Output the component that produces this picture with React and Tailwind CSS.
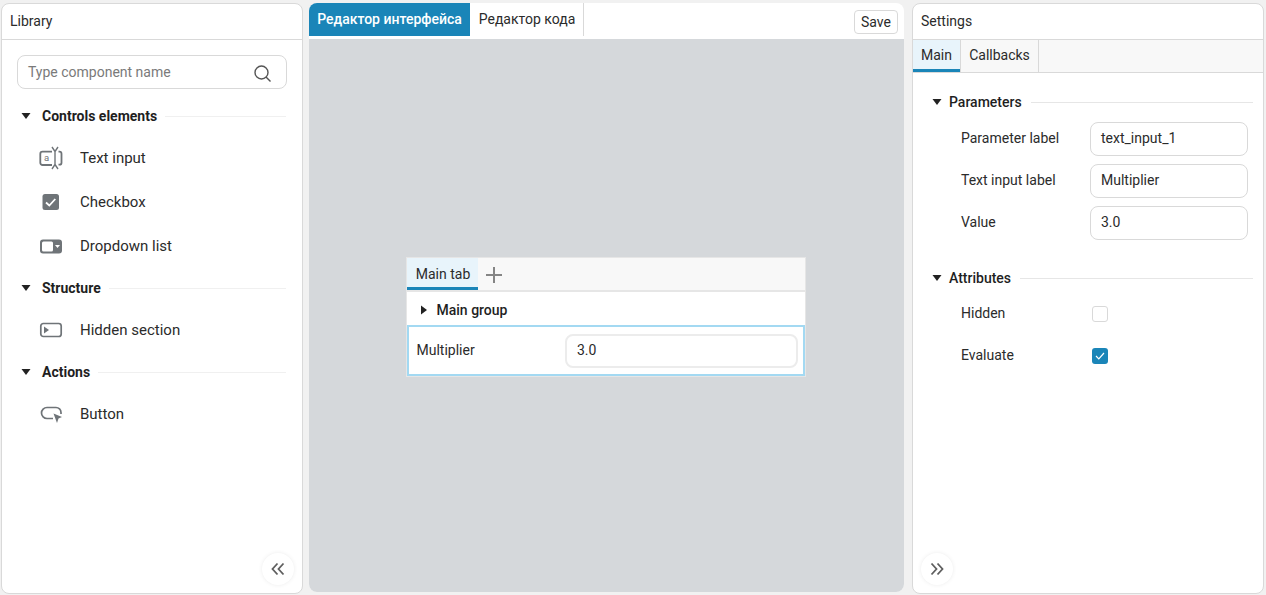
import React from "react";

const Tri = ({ right }) => (
  <svg width="10" height="10" viewBox="0 0 10 10" className="shrink-0">
    {right ? <path d="M2 0.500 L8 5 L2 9.500 Z" fill="#222" /> : <path d="M0.500 2 H9.500 L5 8 Z" fill="#222" />}
  </svg>
);

const Section = ({ title, className = "", lineClass = "bg-[#f0f0f0] ml-2", gap = "ml-[11px]", bold = "font-bold" }) => (
  <div className={`flex items-center ${className}`}>
    <span className="flex w-[10px] shrink-0 justify-center"><Tri /></span>
    <span className={`${gap} text-[14px] leading-[20px] text-[#1f1f1f] ${bold}`}>{title}</span>
    <span className={`h-px flex-1 ${lineClass}`} />
  </div>
);

const g = "#6f7478";
const IconText = () => (
  <svg width="24" height="24" viewBox="0 0 24 24" fill="none" stroke={g} strokeWidth="1.800">
    <path d="M13 5.700H3.500a2.200 2.200 0 0 0-2.200 2.200v8.900a2.200 2.200 0 0 0 2.200 2.200H13" />
    <path d="M19.500 5.700h1a2 2 0 0 1 2 2v9a2 2 0 0 1-2 2h-1" />
    <path d="M13 1l3 4.500v13L13 23M19 1l-3 4.500M16 18.500l3 4.500" strokeWidth="1.400" />
    <text x="5" y="15" fontSize="9.500" fill={g} stroke="none" fontFamily="Roboto, sans-serif">a</text>
  </svg>
);
const IconCheck = () => (
  <svg width="24" height="24" viewBox="0 0 24 24" fill="none">
    <rect x="3.500" y="4" width="16.500" height="16" rx="2.500" fill={g} />
    <path d="M7 12.500l3.300 3 6-6.500" stroke="#fff" strokeWidth="1.800" />
  </svg>
);
const IconDrop = () => (
  <svg width="24" height="24" viewBox="0 0 24 24" fill="none">
    <rect x="1" y="5.500" width="22" height="14" rx="3" fill={g} />
    <rect x="3" y="7.500" width="11" height="10" rx="1.500" fill="#fff" />
    <path d="M16 11h5l-2.500 3z" fill="#fff" />
  </svg>
);
const IconHidden = () => (
  <svg width="24" height="24" viewBox="0 0 24 24" fill="none">
    <rect x="1.800" y="5.500" width="20.400" height="13" rx="2.500" stroke={g} strokeWidth="1.700" />
    <path d="M5 8.500l5 3.500-5 3.500z" fill={g} />
  </svg>
);
const IconButton = () => (
  <svg width="24" height="24" viewBox="0 0 24 24" fill="none">
    <path d="M14 16.500H8a5.500 5.500 0 0 1 0-11h9a5 5 0 0 1 5 5V12" stroke={g} strokeWidth="1.700" />
    <path d="M14.500 11.500L23 15l-3.500 1.500L18 21z" fill={g} />
  </svg>
);

const Item = ({ icon, label }) => (
  <div className="flex h-[44px] items-center pl-[37px]">
    <span className="flex w-[24px] justify-center">{icon}</span>
    <span className="ml-[17px] text-[15px] text-[#2b2b2b]">{label}</span>
  </div>
);

const Collapse = ({ left }) => (
  <div className="flex h-[32px] w-[32px] items-center justify-center rounded-full bg-white shadow-[0_0_4px_rgba(0,0,0,0.08)]">
    <svg width="14" height="14" viewBox="0 0 14 14" fill="none" stroke="#5f5f5f" strokeWidth="1.800">
      {left ? <path d="M6.500 1.500L1.500 7l5 5.500M12.500 1.500L7.500 7l5 5.500" /> : <path d="M1.500 1.500L6.500 7l-5 5.500M7.500 1.500L12.500 7l-5 5.500" />}
    </svg>
  </div>
);

const Field = ({ label, value }) => (
  <div className="flex h-[42px] items-center pl-[48px]">
    <span className="w-[129px] text-[14px] text-[#2b2b2b]">{label}</span>
    <div className="mt-[2px] flex h-[34px] w-[158px] items-center rounded-[8px] border border-[#d9d9d9] px-[10px] pb-[2px] text-[14px] text-[#2b2b2b]">{value}</div>
  </div>
);

export default function App() {
  return (
    <div className="flex h-[595px] w-[1266px] overflow-hidden bg-[#f1f1f1] pb-px pl-px pt-[3px] text-[14px] text-[#2b2b2b] [font-family:Roboto,sans-serif]">
      {/* Library */}
      <div className="flex h-[591px] w-[302px] flex-col rounded-[8px] border border-[#d9d9d9] bg-white">
        <div className="flex h-[36px] shrink-0 items-center border-b border-[#d9d9d9] pl-[8px] text-[#2b2b2b]">Library</div>
        <div className="flex flex-1 flex-col">
          <div className="ml-[15px] mr-[15px] mt-[15px] flex h-[34px] items-center justify-between rounded-[8px] border border-[#d9d9d9] pl-[10px] pr-[15px]">
            <span className="text-[14px] text-[#7a7a7a]">Type component name</span>
            <svg width="17" height="17" viewBox="0 0 17 17" fill="none" stroke="#555" strokeWidth="1.400" className="mt-[2px]">
              <circle cx="7.500" cy="7.500" r="6.500" />
              <path d="M12 12L16.500 16.500" />
            </svg>
          </div>
          <Section title="Controls elements" className="mt-[17px] pl-[19px] pr-[16px]" />
          <div className="mt-[10px]">
            <Item icon={<IconText />} label="Text input" />
            <Item icon={<IconCheck />} label="Checkbox" />
            <Item icon={<IconDrop />} label="Dropdown list" />
          </div>
          <Section title="Structure" className="mt-[10px] pl-[19px] pr-[16px]" />
          <div className="mt-[10px]"><Item icon={<IconHidden />} label="Hidden section" /></div>
          <Section title="Actions" className="mt-[10px] pl-[19px] pr-[16px]" />
          <div className="mt-[10px]"><Item icon={<IconButton />} label="Button" /></div>
          <div className="mb-[8px] mr-[8px] mt-auto flex justify-end"><Collapse left /></div>
        </div>
      </div>

      {/* Editor */}
      <div className="ml-[6px] flex h-[589px] w-[595px] flex-col overflow-hidden rounded-[8px] bg-white">
        <div className="flex h-[36px] shrink-0 items-start">
          <div className="flex h-[33px] w-[161px] items-center justify-center bg-[#1a85b8] font-medium text-white">Редактор интерфейса</div>
          <div className="ml-px flex h-[33px] w-[113px] items-center justify-center border-r border-[#d9d9d9] text-[#2b2b2b]">Редактор кода</div>
          <div className="ml-auto mr-[6px] mt-[7px] flex h-[24px] w-[44px] items-center justify-center rounded-[4px] border border-[#d9d9d9]">Save</div>
        </div>
        <div className="flex flex-1 items-center justify-center bg-[#d5d8db] pr-px pt-[3px]">
          <div className="w-[400px] border border-[#e6e6e6] bg-white">
            <div className="flex h-[34px] items-stretch border-b-2 border-[#e6e6e6] bg-[#f8f8f8]">
              <div className="flex w-[71px] items-center justify-center border-b-[3px] border-[#1a85b8] bg-[#e8f4fb] pl-px pt-[3px]">Main tab</div>
              <div className="ml-[8px] flex items-center pt-px">
                <svg width="16" height="16" viewBox="0 0 16 16" stroke="#858585" strokeWidth="2">
                  <path d="M8 0v16M0 8h16" />
                </svg>
              </div>
            </div>
            <div className="flex h-[33px] items-center pl-[12px] pt-[3px]">
              <Tri right />
              <span className="ml-[7.500px] font-medium text-[#1f1f1f]">Main group</span>
            </div>
            <div className="flex h-[51px] items-center border-2 border-[#a3d9f2] pl-[7.500px] pr-[5px]">
              <span className="w-[148.500px]">Multiplier</span>
              <div className="flex h-[34px] flex-1 items-center rounded-[8px] border-2 border-[#ececec] px-[10px] pb-px">3.0</div>
            </div>
          </div>
        </div>
      </div>

      {/* Settings */}
      <div className="ml-[8px] flex h-[591px] w-[352px] flex-col rounded-[8px] border border-[#d9d9d9] bg-white">
        <div className="flex h-[36px] shrink-0 items-center border-b border-[#d9d9d9] pl-[8px]">Settings</div>
        <div className="flex h-[33px] shrink-0 items-stretch border-b border-[#d9d9d9] bg-[#f8f8f8]">
          <div className="flex w-[47px] items-center justify-center border-b-[3px] border-[#1a85b8] bg-[#e8f4fb] pt-[2px]">Main</div>
          <div className="flex w-[79px] items-center justify-center border-l border-r border-[#d9d9d9] pb-px">Callbacks</div>
        </div>
        <div className="flex flex-1 flex-col">
          <Section title="Parameters" bold="font-medium" gap="ml-[7px]" lineClass="bg-[#e6e6e6] ml-[9px]" className="mt-[19px] pl-[19px] pr-[10px]" />
          <div className="mt-[5px]">
            <Field label="Parameter label" value="text_input_1" />
            <Field label="Text input label" value="Multiplier" />
            <Field label="Value" value="3.0" />
          </div>
          <Section title="Attributes" bold="font-medium" gap="ml-[7px]" lineClass="bg-[#e6e6e6] ml-[9px]" className="mt-[25px] pl-[19px] pr-[10px]" />
          <div className="mt-[4px]">
            <div className="flex h-[42px] items-center pl-[48px]">
              <span className="w-[131px]">Hidden</span>
              <span className="mt-[2px] h-[16px] w-[16px] rounded-[3px] border border-[#d9d9d9]" />
            </div>
            <div className="flex h-[42px] items-center pl-[48px]">
              <span className="w-[131px]">Evaluate</span>
              <span className="mt-[2px] flex h-[16px] w-[16px] items-center justify-center rounded-[3px] bg-[#1a85b8]">
                <svg width="10" height="8" viewBox="0 0 10 8" fill="none" stroke="#fff" strokeWidth="1.200">
                  <path d="M1 4l2.800 2.800L9 1" />
                </svg>
              </span>
            </div>
          </div>
          <div className="mb-[8px] ml-[8px] mt-auto flex"><Collapse /></div>
        </div>
      </div>
    </div>
  );
}
